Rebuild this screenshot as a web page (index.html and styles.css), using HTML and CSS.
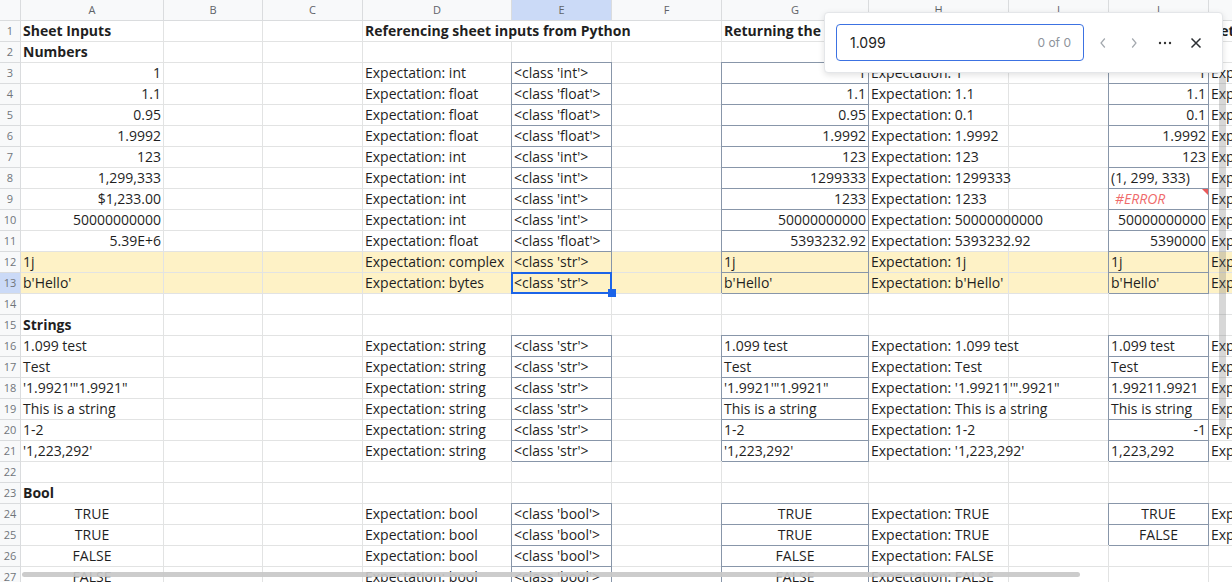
FILE: index.html
```html
<!DOCTYPE html>
<html>
<head>
<meta charset="utf-8">
<link rel="stylesheet" href="styles.css">
</head>
<body>
<div class="sheet">
  <div class="row head"><div></div><div>A</div><div>B</div><div>C</div><div>D</div><div class="on">E</div><div>F</div><div>G</div><div>H</div><div>I</div><div>J</div><div>K</div></div>

  <div class="row"><div class="n">1</div><div class="b">Sheet Inputs</div><div></div><div></div><div class="b s3">Referencing sheet inputs from Python</div><div class="b s2">Returning the sheet inputs</div><div></div><div></div><div class="b">Returning</div></div>
  <div class="row"><div class="n">2</div><div class="b">Numbers</div><div></div><div></div><div></div><div></div><div></div><div></div><div></div><div></div><div></div><div></div></div>
  <div class="row"><div class="n">3</div><div class="r">1</div><div></div><div></div><div>Expectation: int</div><div class="bx">&lt;class 'int'&gt;</div><div></div><div class="r bx">1</div><div>Expectation: 1</div><div></div><div class="r bx">1</div><div>Exp</div></div>
  <div class="row"><div class="n">4</div><div class="r">1.1</div><div></div><div></div><div>Expectation: float</div><div class="bx">&lt;class 'float'&gt;</div><div></div><div class="r bx">1.1</div><div>Expectation: 1.1</div><div></div><div class="r bx">1.1</div><div>Exp</div></div>
  <div class="row"><div class="n">5</div><div class="r">0.95</div><div></div><div></div><div>Expectation: float</div><div class="bx">&lt;class 'float'&gt;</div><div></div><div class="r bx">0.95</div><div>Expectation: 0.1</div><div></div><div class="r bx">0.1</div><div>Exp</div></div>
  <div class="row"><div class="n">6</div><div class="r">1.9992</div><div></div><div></div><div>Expectation: float</div><div class="bx">&lt;class 'float'&gt;</div><div></div><div class="r bx">1.9992</div><div>Expectation: 1.9992</div><div></div><div class="r bx">1.9992</div><div>Exp</div></div>
  <div class="row"><div class="n">7</div><div class="r">123</div><div></div><div></div><div>Expectation: int</div><div class="bx">&lt;class 'int'&gt;</div><div></div><div class="r bx">123</div><div>Expectation: 123</div><div></div><div class="r bx">123</div><div>Exp</div></div>
  <div class="row"><div class="n">8</div><div class="r">1,299,333</div><div></div><div></div><div>Expectation: int</div><div class="bx">&lt;class 'int'&gt;</div><div></div><div class="r bx">1299333</div><div>Expectation: 1299333</div><div></div><div class="bx">(1, 299, 333)</div><div>Exp</div></div>
  <div class="row"><div class="n">9</div><div class="r">$1,233.00</div><div></div><div></div><div>Expectation: int</div><div class="bx">&lt;class 'int'&gt;</div><div></div><div class="r bx">1233</div><div>Expectation: 1233</div><div></div><div class="bx err">#ERROR</div><div>Exp</div></div>
  <div class="row"><div class="n">10</div><div class="r">50000000000</div><div></div><div></div><div>Expectation: int</div><div class="bx">&lt;class 'int'&gt;</div><div></div><div class="r bx">50000000000</div><div>Expectation: 50000000000</div><div></div><div class="r bx">50000000000</div><div>Exp</div></div>
  <div class="row"><div class="n">11</div><div class="r">5.39E+6</div><div></div><div></div><div>Expectation: float</div><div class="bx">&lt;class 'float'&gt;</div><div></div><div class="r bx">5393232.92</div><div>Expectation: 5393232.92</div><div></div><div class="r bx">5390000</div><div>Exp</div></div>
  <div class="row y"><div class="n">12</div><div>1j</div><div></div><div></div><div>Expectation: complex</div><div class="bx">&lt;class 'str'&gt;</div><div></div><div class="bx">1j</div><div>Expectation: 1j</div><div></div><div class="bx">1j</div><div>Exp</div></div>
  <div class="row y"><div class="n on">13</div><div>b'Hello'</div><div></div><div></div><div>Expectation: bytes</div><div class="bx sel">&lt;class 'str'&gt;</div><div></div><div class="bx">b'Hello'</div><div>Expectation: b'Hello'</div><div></div><div class="bx">b'Hello'</div><div>Exp</div></div>
  <div class="row"><div class="n">14</div><div></div><div></div><div></div><div></div><div></div><div></div><div></div><div></div><div></div><div></div><div></div></div>
  <div class="row"><div class="n">15</div><div class="b">Strings</div><div></div><div></div><div></div><div></div><div></div><div></div><div></div><div></div><div></div><div></div></div>
  <div class="row"><div class="n">16</div><div>1.099 test</div><div></div><div></div><div>Expectation: string</div><div class="bx">&lt;class 'str'&gt;</div><div></div><div class="bx">1.099 test</div><div>Expectation: 1.099 test</div><div></div><div class="bx">1.099 test</div><div>Exp</div></div>
  <div class="row"><div class="n">17</div><div>Test</div><div></div><div></div><div>Expectation: string</div><div class="bx">&lt;class 'str'&gt;</div><div></div><div class="bx">Test</div><div>Expectation: Test</div><div></div><div class="bx">Test</div><div>Exp</div></div>
  <div class="row"><div class="n">18</div><div>'1.9921'"1.9921"</div><div></div><div></div><div>Expectation: string</div><div class="bx">&lt;class 'str'&gt;</div><div></div><div class="bx">'1.9921'"1.9921"</div><div>Expectation: '1.99211'".9921"</div><div></div><div class="bx">1.99211.9921</div><div>Exp</div></div>
  <div class="row"><div class="n">19</div><div>This is a string</div><div></div><div></div><div>Expectation: string</div><div class="bx">&lt;class 'str'&gt;</div><div></div><div class="bx">This is a string</div><div>Expectation: This is a string</div><div></div><div class="bx">This is string</div><div>Exp</div></div>
  <div class="row"><div class="n">20</div><div>1-2</div><div></div><div></div><div>Expectation: string</div><div class="bx">&lt;class 'str'&gt;</div><div></div><div class="bx">1-2</div><div>Expectation: 1-2</div><div></div><div class="r bx">-1</div><div>Exp</div></div>
  <div class="row"><div class="n">21</div><div>'1,223,292'</div><div></div><div></div><div>Expectation: string</div><div class="bx">&lt;class 'str'&gt;</div><div></div><div class="bx">'1,223,292'</div><div>Expectation: '1,223,292'</div><div></div><div class="bx">1,223,292</div><div>Exp</div></div>
  <div class="row"><div class="n">22</div><div></div><div></div><div></div><div></div><div></div><div></div><div></div><div></div><div></div><div></div><div></div></div>
  <div class="row"><div class="n">23</div><div class="b">Bool</div><div></div><div></div><div></div><div></div><div></div><div></div><div></div><div></div><div></div><div></div></div>
  <div class="row"><div class="n">24</div><div class="ctr">TRUE</div><div></div><div></div><div>Expectation: bool</div><div class="bx">&lt;class 'bool'&gt;</div><div></div><div class="ctr bx">TRUE</div><div>Expectation: TRUE</div><div></div><div class="ctr bx">TRUE</div><div>Exp</div></div>
  <div class="row"><div class="n">25</div><div class="ctr">TRUE</div><div></div><div></div><div>Expectation: bool</div><div class="bx">&lt;class 'bool'&gt;</div><div></div><div class="ctr bx">TRUE</div><div>Expectation: TRUE</div><div></div><div class="ctr bx">FALSE</div><div>Exp</div></div>
  <div class="row"><div class="n">26</div><div class="ctr">FALSE</div><div></div><div></div><div>Expectation: bool</div><div class="bx">&lt;class 'bool'&gt;</div><div></div><div class="ctr bx">FALSE</div><div>Expectation: FALSE</div><div></div><div></div><div></div></div>
  <div class="row"><div class="n">27</div><div class="ctr">FALSE</div><div></div><div></div><div>Expectation: bool</div><div class="bx">&lt;class 'bool'&gt;</div><div></div><div class="ctr bx">FALSE</div><div>Expectation: FALSE</div><div></div><div></div><div></div></div>
</div>

<div class="vscroll"></div>
<div class="hscroll"></div>

<div class="find">
  <div class="find-input"><span class="q">1.099</span><span class="count">0 of 0</span></div>
  <div class="btn"><svg width="8" height="12" viewBox="0 0 8 12"><path d="M5.8 1.5 L2 6 L5.8 10.5" fill="none" stroke="#a3a8ae" stroke-width="1.2"/></svg></div>
  <div class="btn"><svg width="8" height="12" viewBox="0 0 8 12"><path d="M2.2 1.5 L6 6 L2.2 10.5" fill="none" stroke="#a3a8ae" stroke-width="1.2"/></svg></div>
  <div class="btn"><svg width="14" height="4" viewBox="0 0 14 4"><circle cx="2" cy="2" r="1.2" fill="#333"/><circle cx="7" cy="2" r="1.2" fill="#333"/><circle cx="12" cy="2" r="1.2" fill="#333"/></svg></div>
  <div class="btn"><svg width="12" height="12" viewBox="0 0 12 12"><path d="M1.5 1.5 L10.5 10.5 M10.5 1.5 L1.5 10.5" stroke="#2b2f33" stroke-width="1.5" fill="none"/></svg></div>
</div>
</body>
</html>
```
FILE: styles.css
```css
* { box-sizing: border-box; }
html, body { margin: 0; padding: 0; }
body {
  width: 1232px;
  height: 582px;
  overflow: hidden;
  position: relative;
  background: #fff;
  font-family: "Open Sans", "Noto Sans", sans-serif;
  font-size: 14px;
  color: #1f1f1f;
}
.sheet { width: 1329px; }
.row {
  display: grid;
  grid-template-columns: 21px 143px 99px 100px 149px 100px 110px 147px 140px 100px 100px 120px;
  height: 21px;
}
.row > div {
  height: 21px;
  border-right: 1px solid #e2e3e3;
  border-bottom: 1px solid #e2e3e3;
  padding: 0 2px;
  line-height: 20px;
  white-space: nowrap;
  overflow: visible;
}
.head > div {
  background: #f8f9fa;
  color: #5f6368;
  font-size: 11px;
  text-align: center;
  border-color: #dadcde;
}
.head > .on { background: #cbdaf7; }
.row > .n {
  background: #f8f9fa;
  color: #70757a;
  font-size: 11px;
  text-align: center;
  padding: 0;
  border-color: #dadcde;
}
.row > .n.on { background: #cbdaf7; }
.y > div:not(.n) { background: #fef2c6; }
.r { text-align: right; }
.ctr { text-align: center; }
.b { font-weight: 700; }
.s3 { grid-column: span 3; }
.s2 { grid-column: span 2; }
.row > .bx {
  border-right-color: #8896a9;
  border-bottom-color: #8896a9;
  box-shadow: -1px -1px 0 #8896a9, 0 -1px 0 #8896a9;
}
.row > .err {
  color: #ef6b6b;
  font-style: italic;
  padding-left: 6px;
  position: relative;
}
.err::after {
  content: "";
  position: absolute;
  top: 0;
  right: 0;
  width: 0;
  height: 0;
  border-top: 6px solid #ea5a5a;
  border-left: 6px solid transparent;
}
.row > .sel { position: relative; }
.sel::before {
  content: "";
  position: absolute;
  left: -1px;
  top: -1px;
  right: -1px;
  bottom: -1px;
  border: 2px solid #1c64e8;
}
.sel::after {
  content: "";
  position: absolute;
  width: 8px;
  height: 8px;
  right: -5px;
  bottom: -4px;
  background: #1c64e8;
}
.vscroll {
  position: absolute;
  left: 1219px;
  top: 76px;
  width: 7px;
  height: 352px;
  background: rgba(110, 110, 110, 0.28);
  border-radius: 4px;
}
.hscroll {
  position: absolute;
  left: 22px;
  top: 572px;
  width: 1058px;
  height: 5px;
  background: rgba(200, 200, 200, 0.92);
  border-radius: 3px;
}
.find {
  position: absolute;
  left: 824px;
  top: 12px;
  width: 399px;
  height: 61px;
  background: #fff;
  border: 1px solid #e4e6e9;
  border-radius: 4px;
  box-shadow: 0 2px 6px rgba(0, 0, 0, 0.12);
  display: flex;
  align-items: center;
  padding-left: 11px;
  font-family: Inter, "Noto Sans", sans-serif;
  z-index: 5;
}
.find-input {
  width: 248px;
  height: 37px;
  border: 1px solid #3c72e2;
  border-radius: 4px;
  display: flex;
  align-items: center;
  justify-content: space-between;
  padding: 0 12px 0 13px;
}
.q { font-size: 14px; color: #222; }
.count { font-size: 12px; color: #8e939b; }
.btn {
  width: 31px;
  height: 31px;
  display: flex;
  align-items: center;
  justify-content: center;
}
.find-input + .btn { margin-left: 3px; }
```
